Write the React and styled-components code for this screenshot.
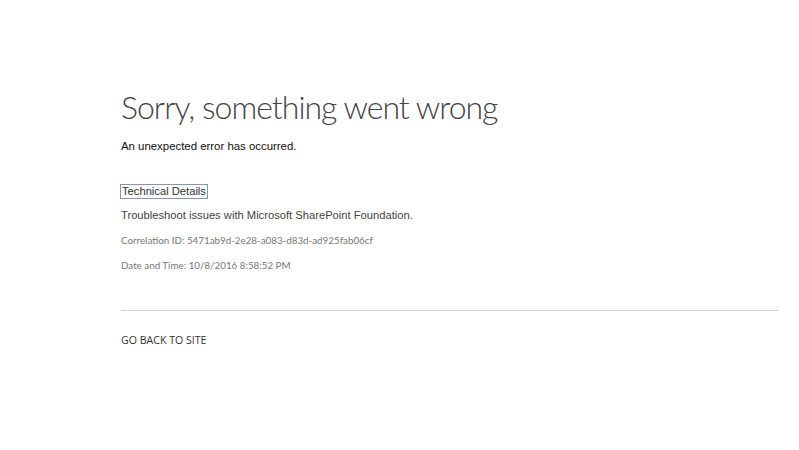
import React from "react";
import styled, { createGlobalStyle } from "styled-components";

const GlobalStyle = createGlobalStyle`
  html, body {
    margin: 0;
    padding: 0;
    background: #fff;
  }
`;

const Page = styled.div`
  width: 799px;
  height: 450px;
  box-sizing: border-box;
  padding: 84px 21px 0 121px;
  overflow: hidden;
`;

const Title = styled.h1`
  margin: 0;
  font-family: "Lato", "Open Sans", sans-serif;
  font-weight: 300;
  font-size: 32px;
  line-height: 46px;
  letter-spacing: -1px;
  color: #444;
`;

const Message = styled.p`
  margin: 8px 0 0;
  font-family: "Liberation Sans", Arial, sans-serif;
  font-size: 11.4px;
  line-height: 16px;
  color: #111;
`;

const DetailsLink = styled.a`
  display: inline-block;
  margin: 30px 0 0 -1px;
  padding: 0 1px;
  border: 1px solid #7d97b8;
  font-family: "Liberation Sans", Arial, sans-serif;
  font-size: 11.2px;
  line-height: 13px;
  color: #333;
  text-decoration: none;
`;

const Trouble = styled.p`
  margin: 8px 0 0;
  font-family: "Liberation Sans", Arial, sans-serif;
  font-size: 11.2px;
  line-height: 16px;
  color: #444;
`;

const Meta = styled.p`
  margin: ${(p) => p.$top}px 0 0;
  font-family: "Lato", "Open Sans", sans-serif;
  font-size: 9.8px;
  line-height: 14px;
  color: #777;
`;

const Divider = styled.hr`
  margin: 38px 0 0;
  border: 0;
  border-top: 1px solid #d0d0d0;
`;

const BackLink = styled.a`
  display: block;
  margin-top: 22px;
  font-family: "Open Sans", "Noto Sans", sans-serif;
  font-size: 10.6px;
  line-height: 14px;
  color: #333;
  text-decoration: none;
`;

export default function App() {
  return (
    <>
      <GlobalStyle />
      <Page>
        <Title>Sorry, something went wrong</Title>
        <Message>An unexpected error has occurred.</Message>
        <DetailsLink href="#">Technical Details</DetailsLink>
        <Trouble>Troubleshoot issues with Microsoft SharePoint Foundation.</Trouble>
        <Meta $top={10}>Correlation ID: 5471ab9d-2e28-a083-d83d-ad925fab06cf</Meta>
        <Meta $top={11}>Date and Time: 10/8/2016 8:58:52 PM</Meta>
        <Divider />
        <BackLink href="#">GO BACK TO SITE</BackLink>
      </Page>
    </>
  );
}
